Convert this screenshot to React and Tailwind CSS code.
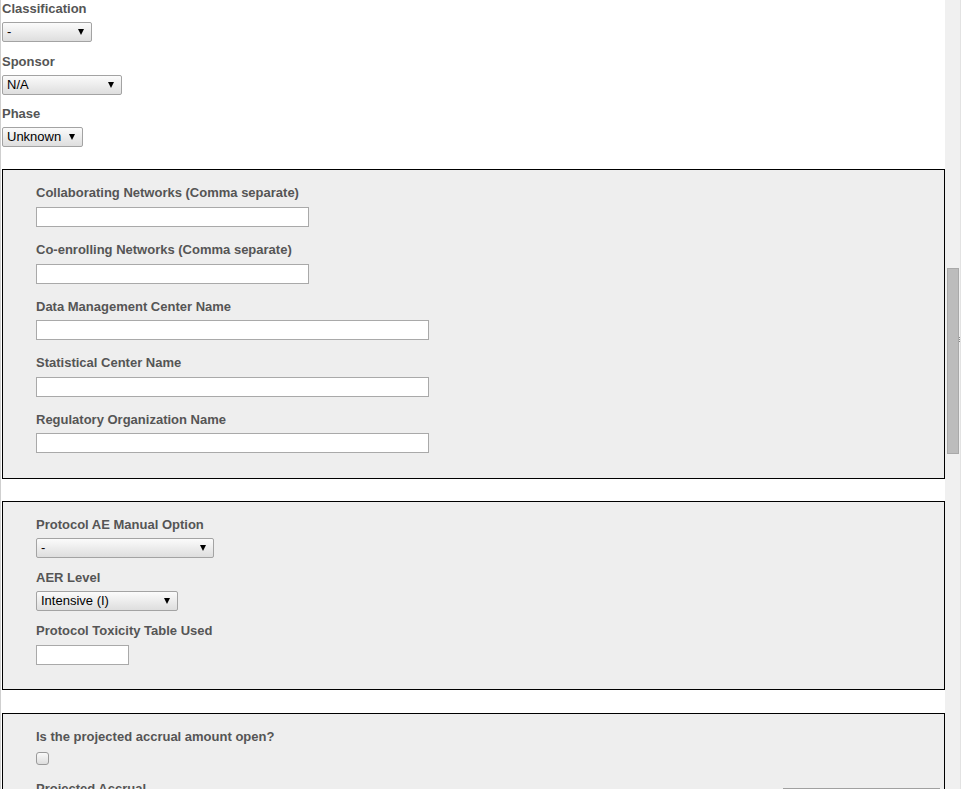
import React from 'react';

const Label = ({ children, className = '' }) => (
  <label className={`block pt-px text-[13px] leading-[15px] font-bold text-[#555] ${className}`}>{children}</label>
);

const Select = ({ value, width }) => (
  <div className={`relative ${width}`}>
    <select
      defaultValue={value}
      className="block w-full h-[20px] appearance-none rounded-[2px] border border-[#a3a3a3] bg-[linear-gradient(#fbfbfb,#dedede)] pl-[4px] pr-[16px] text-[13px] leading-[18px] text-black outline-none"
    >
      <option>{value}</option>
    </select>
    <svg className="pointer-events-none absolute right-[8px] top-[7px]" width="6" height="6" viewBox="0 0 6 6">
      <polygon points="0,0 6,0 3,6" fill="#000" />
    </svg>
  </div>
);

const TextInput = ({ width }) => (
  <input type="text" className={`block h-[20px] ${width} border border-[#a9a9a9] bg-white px-[3px] text-[13px] outline-none`} />
);

const Field = ({ label, children, className = '', gap = 'mb-[7px]' }) => (
  <div className={className}>
    <Label className={gap}>{label}</Label>
    {children}
  </div>
);

const Box = ({ children, className = 'mb-[22px] pb-[24px]' }) => (
  <div className={`${className} border border-black bg-[#eeeeee] pt-[14px] pl-[33px]`}>{children}</div>
);

export default function App() {
  return (
    <div className="relative flex h-[789px] w-full overflow-hidden bg-white" style={{ fontFamily: '"Liberation Sans", Arial, sans-serif' }}>
      <div className="w-[945px] shrink-0 border-l border-[#cfcfcf] pl-px">
        <div className="mb-[22px]">
          <Field label="Classification" gap="mb-[6px]" className="mb-[11px]">
            <Select value="-" width="w-[90px]" />
          </Field>
          <Field label="Sponsor" gap="mb-[6px]" className="mb-[10px]">
            <Select value="N/A" width="w-[120px]" />
          </Field>
          <Field label="Phase" gap="mb-[6px]">
            <Select value="Unknown" width="w-[81px]" />
          </Field>
        </div>

        <Box className="mb-[22px] pb-[25px]">
          <div className="flex flex-col gap-[14px]">
            <Field label="Collaborating Networks (Comma separate)">
              <TextInput width="w-[273px]" />
            </Field>
            <Field label="Co-enrolling Networks (Comma separate)">
              <TextInput width="w-[273px]" />
            </Field>
            <Field label="Data Management Center Name" gap="mb-[6px]">
              <TextInput width="w-[393px]" />
            </Field>
            <Field label="Statistical Center Name">
              <TextInput width="w-[393px]" />
            </Field>
            <Field label="Regulatory Organization Name" gap="mb-[6px]">
              <TextInput width="w-[393px]" />
            </Field>
          </div>
        </Box>

        <Box className="mb-[23px] pb-[24px]">
          <div className="flex flex-col gap-[11px]">
            <Field label="Protocol AE Manual Option" gap="mb-[6px]">
              <Select value="-" width="w-[178px]" />
            </Field>
            <Field label="AER Level" gap="mb-[6px]">
              <Select value="Intensive (I)" width="w-[142px]" />
            </Field>
            <Field label="Protocol Toxicity Table Used">
              <TextInput width="w-[93px]" />
            </Field>
          </div>
        </Box>

        <Box>
          <div className="flex flex-col gap-[15px]">
            <Field label="Is the projected accrual amount open?" gap="mb-[8px]">
              <input
                type="checkbox"
                className="block h-[13px] w-[13px] appearance-none rounded-[3px] border border-[#9a9a9a] bg-[linear-gradient(#fafafa,#dddddd)]"
              />
            </Field>
            <Field label="Projected Accrual">
              <TextInput width="w-[93px]" />
            </Field>
          </div>
        </Box>
      </div>

      <div className="relative w-[16px] shrink-0 border-r border-[#e2e2e2] bg-[#f0f0f0]">
        <div className="ml-[2px] mt-[268px] h-[186px] w-[12px] border border-[#a9a9a9] bg-[#bcbcbc]" />
        <div className="absolute right-0 top-[337px] flex flex-col gap-[1px]">
          <span className="block h-px w-px bg-[#888]" />
          <span className="block h-px w-px bg-[#888]" />
          <span className="block h-px w-px bg-[#888]" />
        </div>
      </div>

      <div className="absolute bottom-0 left-[783px] h-px w-[157px] bg-[#a0a0a0]" />
    </div>
  );
}
